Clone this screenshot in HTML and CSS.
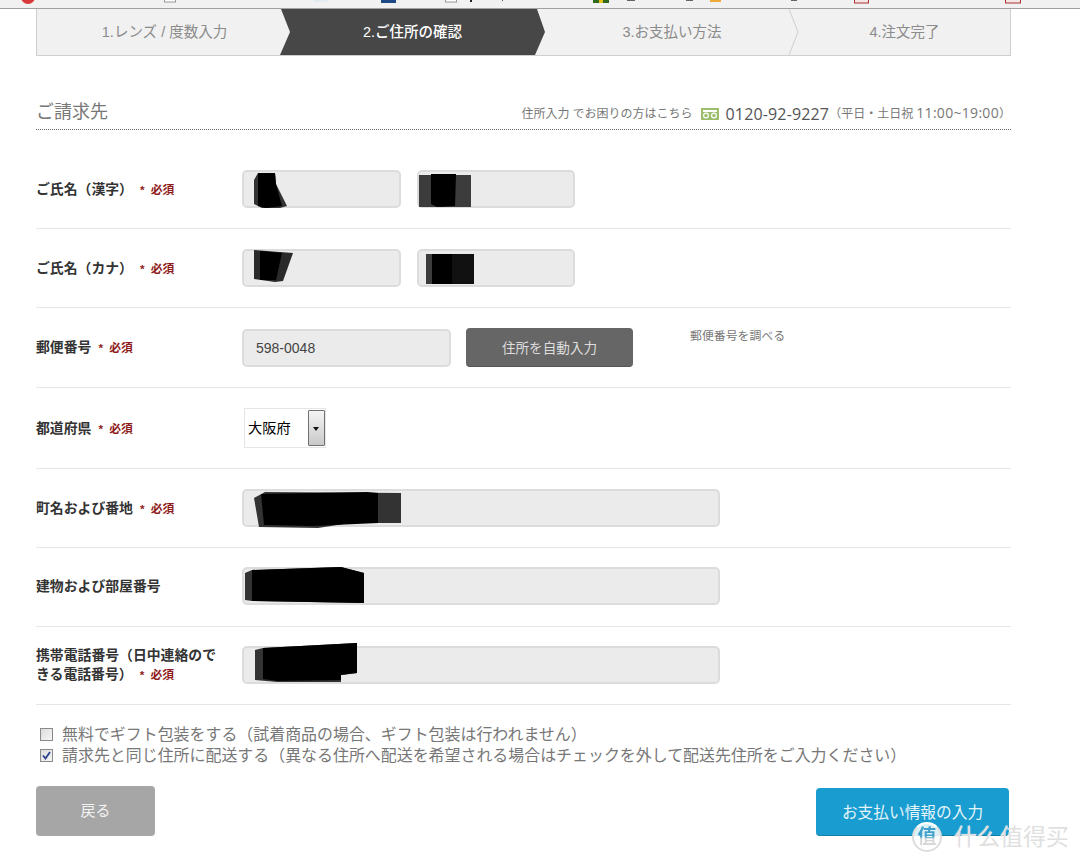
FILE: index.html
```html
<!DOCTYPE html>
<html lang="ja">

<head>
  <meta charset="UTF-8">
  <title>ご請求先</title>
  <link rel="stylesheet" href="styles.css">
</head>

<body>
  <!-- browser toolbar, only the bottom edge is visible -->
  <svg class="toolbar" width="1080" height="9" viewBox="0 0 1080 9">
    <rect width="1080" height="8" fill="#f1f1f1" />
    <rect y="8" width="1080" height="1" fill="#a0a0a0" />
    <circle cx="28" cy="-3" r="7" fill="#d9393a" />
    <rect x="164.500" y="-2" width="11" height="4" fill="#fff" stroke="#999" />
    <rect x="314" y="0" width="14" height="2" fill="#e2ebf0" />
    <rect x="381" y="0" width="15" height="3" fill="#1d4a86" />
    <rect x="445.500" y="-2" width="11" height="4" fill="#fff" stroke="#999" />
    <rect x="470" y="0" width="2" height="2" fill="#222" />
    <rect x="502" y="0" width="1" height="1" fill="#555" />
    <rect x="593" y="0" width="16" height="3" fill="#2f6a1c" />
    <rect x="599" y="0" width="4" height="3" fill="#e6c419" />
    <rect x="627" y="0" width="8" height="1" fill="#666" />
    <rect x="686" y="0" width="7" height="1" fill="#666" />
    <rect x="710" y="0" width="11" height="2" fill="#eda93a" />
    <rect x="791" y="0" width="6" height="1" fill="#666" />
    <rect x="854.500" y="-2" width="14" height="5" fill="#f5e5e5" stroke="#a83232" />
    <rect x="1005.500" y="-2" width="15" height="5" fill="#f5e5e5" stroke="#a83232" />
  </svg>

  <div class="page">
    <div class="steps">
      <div class="steps__item steps__item--1">1.レンズ / 度数入力</div>
      <div class="steps__item steps__item--on">2.ご住所の確認</div>
      <div class="steps__item steps__item--3">3.お支払い方法</div>
      <div class="steps__item steps__item--4">
        <svg class="steps__line" width="12" height="46" viewBox="0 0 12 46">
          <polyline points="0,0 9,23 0,46" fill="none" stroke="#cfcfcf" />
        </svg>
        4.注文完了
      </div>
    </div>

    <div class="head">
      <h2 class="head__title">ご請求先</h2>
      <div class="head__info">
        <span>住所入力 でお困りの方はこちら</span>
        <svg class="head__icon" width="18" height="12" viewBox="0 0 18 12">
          <rect width="18" height="12" fill="#9cbd6c" />
          <rect x="2" y="2" width="14" height="2" fill="#fff" />
          <circle cx="5" cy="7.5" r="2.4" fill="none" stroke="#fff" stroke-width="1.2" />
          <circle cx="13" cy="7.5" r="2.4" fill="none" stroke="#fff" stroke-width="1.2" />
        </svg>
        <span class="head__tel">0120-92-9227</span>
        <span>（平日・土日祝 <span class="head__hours">11:00~19:00</span>）</span>
      </div>
    </div>

    <div class="row row--first">
      <label class="row__label">ご氏名（漢字）<span class="req">* 必須</span></label>
      <div class="field field--half">
        <svg class="ink" width="159" height="38">
          <polygon points="12,10 16,3 33,3 34,14 45,36 38,38 20,38 12,34" fill="#333" />
          <polygon points="16,3 33,3 34,14 40,36 24,38 16,36" fill="#000" />
        </svg>
      </div>
      <div class="field field--half">
        <svg class="ink" width="158" height="38">
          <rect x="2" y="5" width="52" height="32" fill="#3c3c3c" />
          <polygon points="14,4 39,4 38,36 20,37 14,34" fill="#000" />
        </svg>
      </div>
    </div>

    <div class="row">
      <label class="row__label">ご氏名（カナ）<span class="req">* 必須</span></label>
      <div class="field field--half">
        <svg class="ink" width="159" height="38">
          <polygon points="12,1 51,4 41,32 33,33 12,30" fill="#2a2a2a" />
          <polygon points="18,2 40,4 34,31 18,31" fill="#000" />
        </svg>
      </div>
      <div class="field field--half">
        <svg class="ink" width="158" height="38">
          <rect x="9" y="5" width="48" height="30" fill="#111" />
          <rect x="9" y="5" width="6" height="30" fill="#3c3c3c" />
          <rect x="15" y="5" width="20" height="30" fill="#000" />
        </svg>
      </div>
    </div>

    <div class="row row--zip">
      <label class="row__label">郵便番号<span class="req">* 必須</span></label>
      <div class="field field--zip">598-0048</div>
      <button class="btn-auto">住所を自動入力</button>
      <a class="zip-link">郵便番号を調べる</a>
    </div>

    <div class="row row--pref">
      <label class="row__label">都道府県<span class="req">* 必須</span></label>
      <div class="select">
        <span class="select__text">大阪府</span>
        <span class="select__arrow"></span>
      </div>
    </div>

    <div class="row">
      <label class="row__label">町名および番地<span class="req">* 必須</span></label>
      <div class="field field--wide">
        <svg class="ink" width="478" height="38">
          <polygon points="12,9 23,3 159,4 159,34 108,34 76,39 17,38" fill="#333" />
          <polygon points="19,5 125,3 136,4 136,34 70,37 22,36" fill="#000" />
        </svg>
      </div>
    </div>

    <div class="row row--up">
      <label class="row__label">建物および部屋番号</label>
      <div class="field field--wide">
        <svg class="ink" width="478" height="38">
          <polygon points="3,6 10,3 99,0 122,6 122,36 10,34 3,33" fill="#333" />
          <polygon points="10,3 99,0 122,6 122,36 10,34" fill="#000" />
        </svg>
      </div>
    </div>

    <div class="row row--up row--last">
      <label class="row__label">携帯電話番号（日中連絡のできる電話番号）<span class="req">* 必須</span></label>
      <div class="field field--wide">
        <svg class="ink" width="478" height="38">
          <polygon points="13,4 21,2 115,-3 115,27 99,29 99,36 35,36 13,34" fill="#333" />
          <polygon points="21,2 115,-3 115,27 99,29 99,34 35,35 21,33" fill="#000" />
        </svg>
      </div>
    </div>

    <div class="checks">
      <div class="checks__line"><span class="box"></span>無料でギフト包装をする（試着商品の場合、ギフト包装は行われません）</div>
      <div class="checks__line"><span class="box box--on">
          <svg width="9" height="9" viewBox="0 0 9 9">
            <polyline points="1,4.5 3.5,7.5 8,1" fill="none" stroke="#2c3f8f" stroke-width="1.8" />
          </svg>
        </span>請求先と同じ住所に配送する（異なる住所へ配送を希望される場合はチェックを外して配送先住所をご入力ください）</div>
    </div>

    <div class="actions">
      <button class="btn-back">戻る</button>
      <button class="btn-next">お支払い情報の入力</button>
    </div>
  </div>

  <!-- site watermark on top of the screenshot -->
  <div class="mark">
    <span class="mark__logo"><span class="mark__glyph">值</span></span>
    <span class="mark__text">什么值得买</span>
  </div>
</body>

</html>
```

FILE: styles.css
```css
* {
  box-sizing: border-box;
}

html,
body {
  height: 864px;
  overflow: hidden;
}

body {
  margin: 0;
  background: #fff;
  color: #333;
  font-family: "Liberation Sans", "Noto Sans CJK JP", sans-serif;
}

.toolbar {
  display: block;
}

.page {
  width: 975px;
  margin-left: 36px;
}

/* steps */
.steps {
  display: flex;
  height: 47px;
  background: #f1f1f1;
  border: 1px solid #cfcfcf;
  border-top: 0;
  font-size: 14.5px;
  color: #8b8b8b;
}

.steps__item {
  position: relative;
  display: flex;
  align-items: center;
  justify-content: center;
  height: 46px;
  padding-bottom: 3px;
}

.steps__item--1 {
  width: 243px;
  padding-left: 12px;
}

.steps__item--on {
  width: 265px;
  background: #474747;
  color: #fff;
  font-weight: 500;
  clip-path: polygon(1px 0, 10px 23px, 0 46px, 255px 46px, 265px 23px, 257px 0);
}

.steps__item--3 {
  width: 244px;
  padding-left: 10px;
}

.steps__item--4 {
  width: 221px;
  padding-left: 10px;
}

.steps__line {
  position: absolute;
  left: 0;
  top: 0;
}

/* section head */
.head {
  display: flex;
  justify-content: space-between;
  align-items: flex-end;
  height: 74px;
  padding-bottom: 5px;
  border-bottom: 1px dotted #666;
}

.head__title {
  margin: 0 0 -1px;
  font-size: 18px;
  font-weight: 400;
  line-height: 26px;
  color: #777;
}

.head__info {
  display: flex;
  align-items: center;
  font-family: "Open Sans", "Noto Sans CJK JP", sans-serif;
  font-size: 12px;
  line-height: 20px;
  color: #777;
}

.head__icon {
  margin: 0 7px 0 8px;
}

.head__tel {
  font-size: 16px;
  color: #555;
  letter-spacing: 0.15px;
}

.head__hours {
  font-size: 14px;
  line-height: 1;
  letter-spacing: 0.3px;
}

/* form rows */
.row {
  display: flex;
  align-items: center;
  padding: 20px 0;
  border-bottom: 1px solid #e6e6e6;
}

.row--first {
  padding-top: 40px;
}

.row--up {
  padding-top: 19px;
  padding-bottom: 21px;
}

.row--last {
  padding-bottom: 20px;
}

.row__label {
  flex: none;
  width: 206px;
  padding-right: 20px;
  font-size: 13.85px;
  font-weight: 700;
  line-height: 19px;
  color: #333;
}

.req {
  margin-left: 7px;
  font-size: 11.8px;
  line-height: 1;
  word-spacing: 3px;
  color: #8e1b1b;
}

.field {
  position: relative;
  height: 38px;
  background: #ebebeb;
  border: 2px solid #dcdcdc;
  border-radius: 5px;
  font-size: 14px;
  line-height: 34px;
  padding-left: 12px;
  color: #444;
}

.field--half {
  width: 159px;
  margin-right: 16px;
}

.field--half + .field--half {
  width: 158px;
}

.field--zip {
  width: 209px;
  margin-right: 15px;
}

.field--wide {
  width: 478px;
}

/* scribbled over by the author */
.ink {
  position: absolute;
  left: -2px;
  top: -2px;
  overflow: visible;
}

.btn-auto {
  width: 167px;
  height: 39px;
  margin-right: 57px;
  padding: 0;
  background: #666;
  border: 0;
  border-bottom: 1px solid #555;
  border-radius: 4px;
  font: inherit;
  font-size: 13.6px;
  color: #ddd;
}

.zip-link {
  align-self: flex-start;
  font-size: 11.9px;
  line-height: 16px;
  color: #777;
}

.select {
  display: flex;
  justify-content: space-between;
  width: 82px;
  height: 40px;
  margin-left: 2px;
  padding: 1px 0 1px 3px;
  background: #fff;
  border: 1px solid #e6e6e6;
}

.select__text {
  font-size: 14.2px;
  line-height: 37px;
  color: #000;
}

.select__arrow {
  position: relative;
  width: 17px;
  background: linear-gradient(#f4f4f4, #c9c9c9);
  border: 1px solid #707070;
  border-radius: 1px;
}

.select__arrow::after {
  content: "";
  position: absolute;
  left: 4px;
  top: 16px;
  border: 3.5px solid transparent;
  border-top: 4px solid #111;
  border-bottom: 0;
}

/* checkboxes */
.checks {
  padding: 19px 0 0 4px;
  font-size: 15.95px;
  line-height: 21px;
  color: #777;
}

.checks__line {
  display: flex;
  align-items: center;
  white-space: nowrap;
}

.box {
  display: flex;
  align-items: center;
  justify-content: center;
  flex: none;
  width: 13px;
  height: 13px;
  margin-right: 9px;
  background: linear-gradient(135deg, #dcdcdc, #f6f6f6);
  border: 1px solid #8a8a8a;
}

/* buttons */
.actions {
  display: flex;
  justify-content: space-between;
  align-items: flex-end;
  height: 50px;
  margin-top: 20px;
  padding-right: 2px;
}

.btn-back {
  width: 119px;
  height: 50px;
  padding: 0 0 3px;
  background: #a6a6a6;
  border: 0;
  border-radius: 4px;
  font: inherit;
  font-size: 15px;
  color: #f2f2f2;
}

.btn-next {
  width: 193px;
  height: 48px;
  padding: 0 0 1px;
  background: #199dd0;
  border: 0;
  border-bottom: 1px solid #137ea8;
  border-radius: 4px;
  font: inherit;
  font-size: 15.7px;
  color: #e4f4fa;
}

/* watermark */
.mark {
  position: absolute;
  left: 912px;
  top: 822px;
  display: flex;
  align-items: center;
}

.mark__logo {
  width: 30px;
  height: 30px;
  background: rgba(255, 255, 255, 0.85);
  border: 2px solid #ddd;
  border-top-color: #fff;
  border-radius: 50%;
  font-size: 19px;
  font-weight: 700;
  line-height: 25px;
  text-align: center;
}

.mark__glyph {
  display: block;
  background: linear-gradient(#3f9fc8 50%, #d8d8d8 60%);
  -webkit-background-clip: text;
  background-clip: text;
  color: transparent;
}

.mark__text {
  margin-left: 12px;
  font-size: 23px;
  line-height: 30px;
  color: #e0e0e0;
  text-shadow: 0 0 1px #fff;
}
```
